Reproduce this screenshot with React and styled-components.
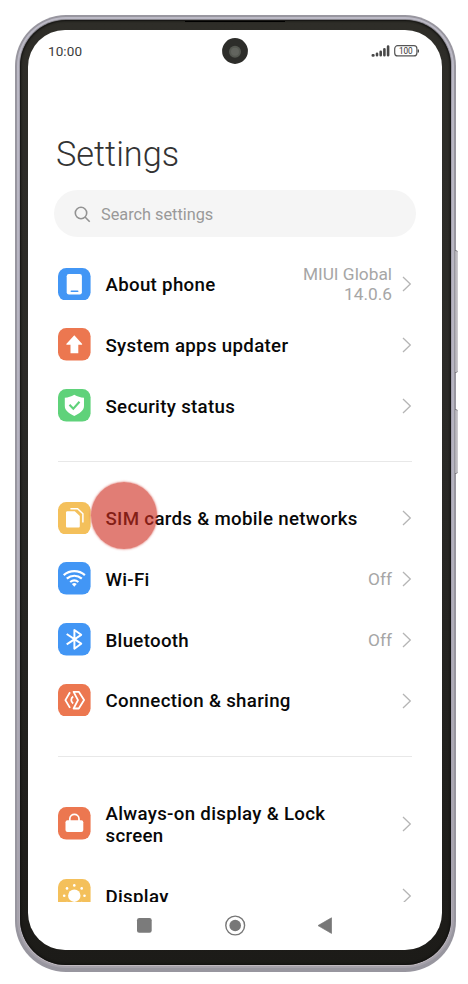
import React from "react";
import styled, { createGlobalStyle } from "styled-components";

const GlobalStyle = createGlobalStyle`
  * { box-sizing: border-box; }
  body { margin: 0; background: #fff; font-family: Roboto, sans-serif; }
`;

const Stage = styled.main`
  width: 468px;
  height: 984px;
  padding: 15px 12px 11px 15px;
  overflow: hidden;
  background: #fff;
`;

const Frame = styled.div`
  position: relative;
  width: 440.5px;
  height: 957px;
  padding: 2px 2px 4px;
  border-radius: 51px;
  background: #98969f;
`;

const Rim = styled.div`
  height: 100%;
  padding: 2px;
  border-radius: 49px;
  background: linear-gradient(#bcbac6, #b5b3c0 50%, #a5a1aa);
`;

const Edge = styled.div`
  height: 100%;
  padding: 1px;
  border-radius: 47px;
  background: linear-gradient(#85838a, #a5a2b0 10%, #a5a2b0 90%, #c1bac0);
`;

const Bezel = styled.div`
  height: 100%;
  padding: 10px 8.5px 15px 8px;
  border-radius: 46px;
  background: linear-gradient(#2e2d28, #2b2a27 40%, #1c1b18);
  box-shadow: inset 0 0 2px 1px #11110f;
`;

const Speaker = styled.div`
  position: absolute;
  top: 6px;
  left: 170px;
  width: 100px;
  height: 1px;
  background: #000;
`;

const SideButton = styled.div`
  position: absolute;
  left: 440px;
  top: ${(p) => p.$top}px;
  width: 3px;
  height: ${(p) => p.$height}px;
  border-radius: 0 3px 3px 0;
  background: linear-gradient(90deg, #aaa8ae, #d0ced3);
  border-top: 1px solid #77757b;
  border-bottom: 1px solid #77757b;
`;

const Screen = styled.div`
  display: flex;
  flex-direction: column;
  width: 414px;
  height: 920px;
  border-radius: 37px;
  background: #fff;
  overflow: hidden;
`;

const StatusBar = styled.header`
  display: grid;
  grid-template-columns: 1fr 26px 1fr;
  align-items: center;
  height: 41px;
  flex: none;
  padding: 0 20px;
`;

const Clock = styled.span`
  font-size: 13.5px;
  font-weight: 400;
  letter-spacing: 0.1px;
  color: #3c3c3c;
`;

const StatusIcons = styled.div`
  display: flex;
  justify-content: flex-end;
  padding-right: 3px;
`;

const Title = styled.h1`
  margin: 62px 0 0 28px;
  height: 42px;
  flex: none;
  font-size: 34.3px;
  line-height: 42px;
  font-weight: 300;
  color: #333;
`;

const Search = styled.div`
  display: flex;
  align-items: center;
  gap: 10px;
  flex: none;
  width: 362px;
  height: 47px;
  margin: 15px 0 0 26px;
  padding: 1px 0 0 20px;
  border-radius: 24px;
  background: #f5f5f5;
  color: #999;
  font-size: 16.3px;
`;

const List = styled.div`
  flex: 1;
  min-height: 0;
  overflow: hidden;
  padding: 16.6px 30px 0;
`;

const Row = styled.div`
  display: flex;
  align-items: center;
  height: ${(p) => p.$height || 60.7}px;
`;

const Tile = styled.svg`
  display: block;
  flex: none;
  width: 32.6px;
  height: 32.6px;
  margin-right: 14.9px;
`;

const Label = styled.span`
  flex: 1;
  max-width: ${(p) => (p.$wrap ? "250px" : "none")};
  font-size: 18.7px;
  line-height: 22.5px;
  font-weight: 500;
  letter-spacing: 0.31px;
  color: #080808;
  white-space: ${(p) => (p.$wrap ? "normal" : "nowrap")};
  padding-top: 3.4px;
`;

const Value = styled.span`
  width: 100px;
  margin-left: auto;
  font-size: 17.3px;
  line-height: 20px;
  text-align: right;
  color: #a6a6a6;
  padding-top: 1px;
`;

const Chevron = styled.svg`
  flex: none;
  display: block;
  width: 10px;
  height: 16px;
  margin: 1px 0 0 10px;
  ${(p) => p.$push && "margin-left: auto;"}
`;

const Divider = styled.hr`
  height: 1px;
  margin: 25.3px 0 ${(p) => p.$gap}px;
  border: 0;
  background: #e8e8e8;
`;

const Highlighted = styled.div`
  position: relative;
`;

const TapMarker = styled.span`
  position: absolute;
  left: 32.5px;
  top: -5.5px;
  width: 66px;
  height: 67px;
  border-radius: 50%;
  background: rgba(207, 45, 33, 0.62);
  box-shadow: 0 0 2px 0.5px rgba(207, 45, 33, 0.5);
`;

const NavBar = styled.nav`
  display: flex;
  justify-content: space-between;
  align-items: center;
  flex: none;
  height: 48px;
  padding: 0 108px 1px;
`;

const glyphs = {
  phone: (
    <>
      <rect x="8.7" y="6" width="15.2" height="20.5" rx="2.2" fill="#fff" />
      <path d="M13.3 23.2h6.4" stroke="#4296f5" strokeWidth="1.6" strokeLinecap="round" />
    </>
  ),
  arrow: (
    <path d="M16.3 7.3 24 15.8c.4.5.1 1-.5 1h-3.2v8.5h-7.8v-8.5H9c-.6 0-.9-.5-.5-1Z" fill="#fff" />
  ),
  shield: (
    <>
      <path d="M16.3 5.7c3.2 1.8 6 2.8 9.7 3.1v8.3c0 4.6-4.6 7.6-9.7 10-5.1-2.4-9.5-5.4-9.5-10V8.8c3.5-.3 6.3-1.3 9.5-3.1Z" fill="#fff" />
      <path d="m11.5 15.8 3.8 4 6.2-7" fill="none" stroke="#5fd27a" strokeWidth="2.1" />
    </>
  ),
  sim: (
    <>
      <path d="M9.5 9.3h7.3l5 4.8v10c0 1-.5 1.5-1.5 1.5H9.5c-1 0-1.5-.5-1.5-1.5V10.8c0-1 .5-1.5 1.5-1.5Z" fill="#fff" />
      <path d="M12.4 6.8h7.2l5.3 5v8.7" fill="none" stroke="#fff" strokeWidth="1.5" />
    </>
  ),
  wifi: (
    <>
      <g fill="none" stroke="#fff" strokeWidth="2.2">
        <path d="M5.7 13.2c6-5.3 15.2-5.3 21.2 0" />
        <path d="M8.8 16.7c4.4-3.9 10.6-3.9 15 0" />
        <path d="M12.2 20c2.5-2.1 5.7-2.1 8.2 0" />
      </g>
      <path d="M13.9 22.1c1.5-1.3 3.3-1.3 4.8 0l-2.4 2.6Z" fill="#fff" />
    </>
  ),
  bluetooth: (
    <path d="m8.7 11 14.5 9.7-6.8 5V7l6.8 4.8-14.5 9.5" fill="none" stroke="#fff" strokeWidth="2" strokeLinejoin="round" />
  ),
  sharing: (
    <g fill="none" stroke="#fff" strokeWidth="1.8" strokeLinejoin="round">
      <path d="m12 8.3-4.6 7.8 4.6 7.8M15.2 12.6c-2.6 1.7-2.6 5.2 0 7" />
      <path d="M15.6 7.8h5.2l5.3 8.3-5.3 8.4h-5.2l4.4-8.4Z" />
    </g>
  ),
  lock: (
    <>
      <rect x="7.5" y="13.2" width="17.8" height="11.9" rx="2" fill="#fff" />
      <path d="M11.8 14v-2.2c0-5.8 9.2-5.8 9.2 0V14" fill="none" stroke="#fff" strokeWidth="1.7" />
    </>
  ),
  sun: (
    <g fill="#fff">
      <circle cx="16.3" cy="16.7" r="6.2" />
      <circle cx="16.3" cy="6.4" r="1.3" />
      <circle cx="9" cy="9.4" r="1.3" />
      <circle cx="23.7" cy="9.4" r="1.3" />
      <circle cx="6.2" cy="16.7" r="1.3" />
      <circle cx="26.5" cy="16.7" r="1.3" />
      <circle cx="9" cy="24" r="1.3" />
      <circle cx="23.7" cy="24" r="1.3" />
    </g>
  ),
};

function Item({ icon, color, label, value, height, wrap }) {
  return (
    <Row $height={height}>
      <Tile viewBox="0 0 32.6 32.6">
        <rect width="32.6" height="32.6" rx="8.3" fill={color} />
        {glyphs[icon]}
      </Tile>
      <Label $wrap={wrap}>{label}</Label>
      {value && <Value>{value}</Value>}
      <Chevron $push={!value} viewBox="0 0 10 16">
        <path d="m1 1 7.3 7L1 15" fill="none" stroke="#b5b5b5" strokeWidth="1.3" />
      </Chevron>
    </Row>
  );
}

function Camera() {
  return (
    <svg width="26" height="26" viewBox="0 0 26 26">
      <circle cx="13" cy="13" r="12.9" fill="#2d2d2a" />
      <circle cx="13" cy="13.8" r="6" fill="#555851" />
      <circle cx="13" cy="13.8" r="4" fill="#62645e" />
    </svg>
  );
}

function Signal() {
  return (
    <svg width="48" height="14" viewBox="0 0 48 14">
      <g stroke="#484848" strokeWidth="2.6" strokeLinecap="round">
        <path d="M1.8 11.4h.6M6 11.3V9.8M9.7 11.3V7.7M13.4 11.3V5.2M17.1 11.3V2.6" />
      </g>
      <rect x="23.7" y="1.7" width="22.2" height="10.2" rx="3" fill="#fff" stroke="#555" strokeWidth="1.2" />
      <path d="M47.3 5.5v3" stroke="#444" strokeWidth="1.3" />
      <text x="34.8" y="9.8" textAnchor="middle" fontSize="8.2" fill="#333">100</text>
    </svg>
  );
}

export default function App() {
  return (
    <>
      <GlobalStyle />
      <Stage>
        <Frame>
          <Rim>
            <Edge>
              <Bezel>
                <Screen>
                  <StatusBar>
                    <Clock>10:00</Clock>
                    <Camera />
                    <StatusIcons>
                      <Signal />
                    </StatusIcons>
                  </StatusBar>
                  <Title>Settings</Title>
                  <Search>
                    <svg width="17" height="17" viewBox="0 0 17 17" fill="none" stroke="#929292" strokeWidth="1.6">
                      <circle cx="7" cy="7" r="5.7" />
                      <path d="m11 11 4.7 4.7" />
                    </svg>
                    Search settings
                  </Search>
                  <List>
                    <Item icon="phone" color="#4296f5" label="About phone" value="MIUI Global 14.0.6" />
                    <Item icon="arrow" color="#ec7750" label="System apps updater" />
                    <Item icon="shield" color="#5fd27a" label="Security status" />
                    <Divider $gap={25.7} />
                    <Highlighted>
                      <Item icon="sim" color="#f4c05b" label="SIM cards & mobile networks" />
                      <TapMarker />
                    </Highlighted>
                    <Item icon="wifi" color="#4296f5" label="Wi-Fi" value="Off" />
                    <Item icon="bluetooth" color="#4296f5" label="Bluetooth" value="Off" />
                    <Item icon="sharing" color="#ec7750" label="Connection & sharing" />
                    <Divider $gap={25.4} />
                    <Item icon="lock" color="#ec7750" label="Always-on display & Lock screen" height={83} wrap />
                    <Item icon="sun" color="#f4c05b" label="Display" />
                  </List>
                  <NavBar>
                    <svg width="17" height="17" viewBox="0 0 17 17">
                      <rect x="1" y="1" width="14.7" height="14.7" rx="2.2" fill="#7b7b7b" />
                    </svg>
                    <svg width="21" height="21" viewBox="0 0 21 21">
                      <circle cx="10.2" cy="10.5" r="9.4" fill="none" stroke="#777" strokeWidth="1.4" />
                      <circle cx="10.2" cy="10.5" r="5.8" fill="#777" />
                    </svg>
                    <svg width="17" height="17" viewBox="0 0 17 17">
                      <path d="M14.5.8v15.6L1 8.6Z" fill="#777" stroke="#777" strokeWidth=".7" strokeLinejoin="round" />
                    </svg>
                  </NavBar>
                </Screen>
              </Bezel>
            </Edge>
          </Rim>
          <Speaker />
          <SideButton $top={235} $height={123} />
          <SideButton $top={394} $height={65} />
        </Frame>
      </Stage>
    </>
  );
}
